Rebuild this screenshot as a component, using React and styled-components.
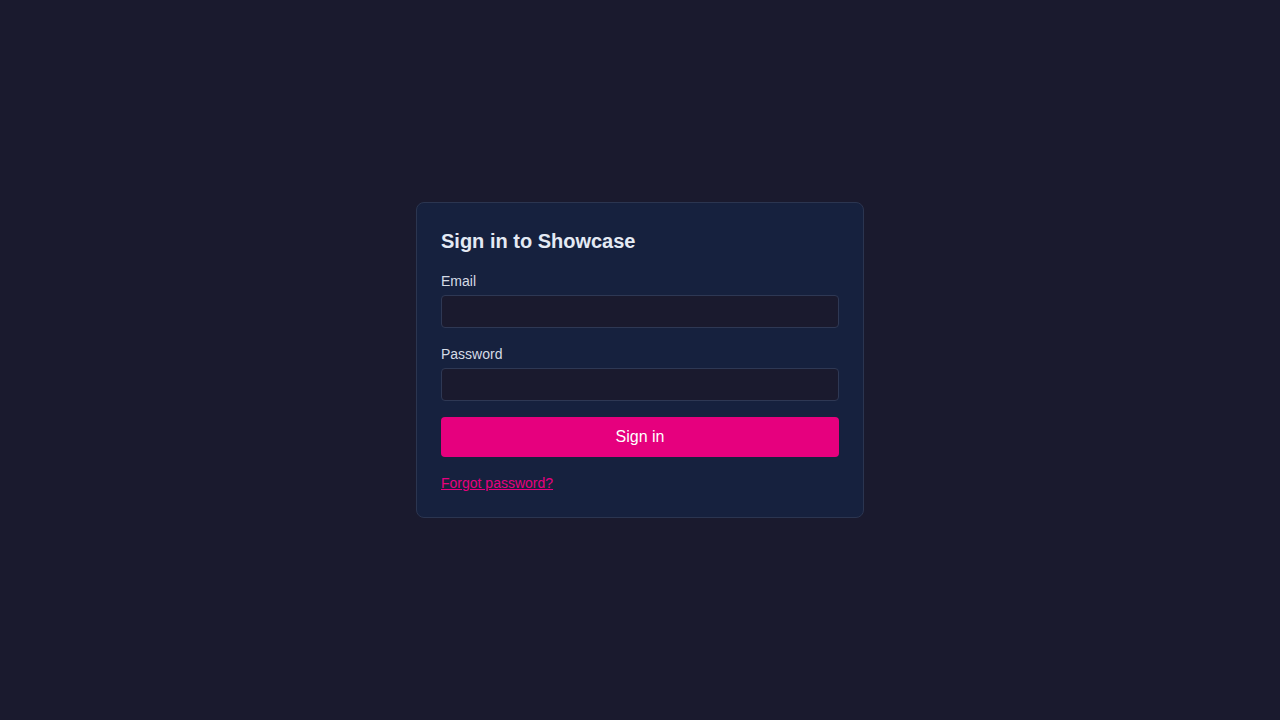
import React from "react";
import styled, { createGlobalStyle } from "styled-components";

const Global = createGlobalStyle`
  * { box-sizing: border-box; }
  html, body { margin: 0; padding: 0; height: 100%; }
  body {
    background: #1a1a2e;
    font-family: "Liberation Sans", Arial, sans-serif;
    color: #e6e9f0;
  }
  #root { min-height: 100vh; }
`;

const Page = styled.main`
  min-height: 100vh;
  display: flex;
  align-items: center;
  justify-content: center;
`;

const Card = styled.form`
  width: 448px;
  background: #16213e;
  border: 1px solid #2b3550;
  border-radius: 8px;
  padding: 24px 24px 25px;
  display: flex;
  flex-direction: column;
`;

const Title = styled.h1`
  margin: 0 0 18px;
  font-size: 20px;
  line-height: 28px;
  font-weight: 700;
  color: #e4eaf4;
`;

const Field = styled.div`
  display: flex;
  flex-direction: column;
  margin-bottom: ${(p) => p.$gap}px;
`;

const Label = styled.label`
  font-size: 14px;
  line-height: 16px;
  color: #d5dbe6;
  margin-bottom: 6px;
`;

const Input = styled.input`
  height: 33px;
  width: 100%;
  background: #1a1a2e;
  border: 1px solid #2e3854;
  border-radius: 4px;
  color: #e6e9f0;
  padding: 0 10px;
  font-family: inherit;
  font-size: 14px;
  outline: none;
`;

const Button = styled.button`
  height: 40px;
  width: 100%;
  border: none;
  border-radius: 4px;
  background: #e6007e;
  color: #ffffff;
  font-family: inherit;
  font-size: 16px;
  cursor: pointer;
  margin-bottom: 17px;
`;

const Link = styled.a`
  align-self: flex-start;
  font-size: 14px;
  line-height: 18px;
  color: #e6007e;
  text-decoration: underline;
`;

export default function App() {
  return (
    <>
      <Global />
      <Page>
        <Card onSubmit={(e) => e.preventDefault()}>
          <Title>Sign in to Showcase</Title>
          <Field $gap={18}>
            <Label htmlFor="email">Email</Label>
            <Input id="email" type="email" />
          </Field>
          <Field $gap={16}>
            <Label htmlFor="password">Password</Label>
            <Input id="password" type="password" />
          </Field>
          <Button type="submit">Sign in</Button>
          <Link href="#">Forgot password?</Link>
        </Card>
      </Page>
    </>
  );
}
